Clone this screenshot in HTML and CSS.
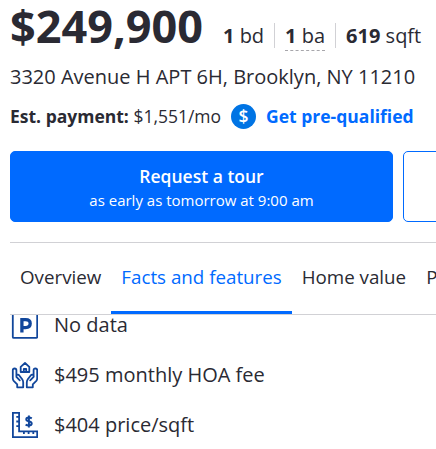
FILE: index.html
```html
<!DOCTYPE html>
<html lang="en">
<head>
<meta charset="utf-8">
<title>3320 Avenue H APT 6H</title>
<link rel="stylesheet" href="styles.css">
</head>
<body>
<main class="home">
  <header class="summary">
    <span class="price">$249,900</span>
    <div class="specs">
      <span class="spec"><b>1</b> bd</span>
      <span class="spec"><span class="hint"><b>1</b> ba</span></span>
      <span class="spec"><b>619</b> sqft</span>
    </div>
  </header>
  <h1 class="address">3320 Avenue H APT 6H, Brooklyn, NY 11210</h1>
  <div class="payment">
    <span><b>Est. payment:</b> <span class="amount">$1,551/mo</span></span>
    <span class="coin">$</span>
    <a class="prequal">Get pre-qualified</a>
  </div>
  <div class="actions">
    <button class="tour"><span class="tour-title">Request a tour</span><span class="tour-time">as early as tomorrow at 9:00 am</span></button>
    <button class="contact" aria-label="Contact agent"></button>
  </div>
  <nav class="tabs">
    <a class="tab">Overview</a>
    <a class="tab active">Facts and features</a>
    <a class="tab">Home value</a>
    <a class="tab">Price</a>
  </nav>
  <div class="facts">
    <ul class="fact-list">
      <li class="fact">
        <svg class="icon" viewBox="0 0 28 28"><rect x="2.8" y="1.7" width="24.4" height="25.2" rx="1" fill="none" stroke="#11469b" stroke-width="1.8"/><path d="M11.9 21.6V8.7H15.6Q20.2 8.7 20.2 12.6Q20.2 16.6 15.6 16.6H11.9" fill="none" stroke="#11469b" stroke-width="3.3"/></svg>
        <span>No data</span>
      </li>
      <li class="fact">
        <svg class="icon" viewBox="0 0 28 28" fill="none" stroke="#11469b" stroke-width="1.8" stroke-linejoin="round" stroke-linecap="round"><path d="M10.7 5.8L15 2L19.3 5.8V11H10.7ZM13.8 11V8H16.2V11"/><path d="M7.2 26.3V23.3L3.7 19.8Q2.8 18.8 2.8 17.2V9.2Q2.8 7.5 4.6 7.5T6.4 9.2V15.2M9.8 19.4L6.4 15.9Q5.9 14.4 7.2 13.8Q8.4 13.3 9.3 14.5L12.2 18.3Q13.2 19.6 13.2 21.5V26.3H7.2"/><path d="M22.8 26.3V23.3L26.3 19.8Q27.2 18.8 27.2 17.2V9.2Q27.2 7.5 25.4 7.5T23.6 9.2V15.2M20.2 19.4L23.6 15.9Q24.1 14.4 22.8 13.8Q21.6 13.3 20.7 14.5L17.8 18.3Q16.8 19.6 16.8 21.5V26.3H22.8"/></svg>
        <span>$495 monthly HOA fee</span>
      </li>
      <li class="fact">
        <svg class="icon" viewBox="0 0 28 28" fill="none" stroke="#11469b" stroke-width="1.8"><path d="M2.9 1.9H9.1V20.3H27.2V26.2H2.9ZM6.3 5.8H9.1M6.3 10.5H9.1M6.3 15.2H9.1M13.9 20.3V22.9M18.6 20.3V22.9M23.3 20.3V22.9"/><path d="M21.8 7.4Q20.5 6.6 18.7 6.6Q16.3 6.6 16.3 8.4Q16.3 9.6 18.8 10.2Q21.7 10.9 21.7 12.5Q21.7 14.4 18.8 14.4Q17 14.4 15.6 13.6M18.9 4.5V16.4" stroke-width="2"/></svg>
        <span>$404 price/sqft</span>
      </li>
    </ul>
  </div>
</main>
</body>
</html>
```
FILE: styles.css
```css
* { box-sizing: border-box; }

body {
  margin: 0;
  background: #fff;
  color: #2a2a33;
  font-family: "Open Sans", "Noto Sans", sans-serif;
  overflow: hidden;
}

.home {
  height: 449px;
  padding-left: 10px;
  overflow: hidden;
  white-space: nowrap;
}

.summary {
  display: flex;
  height: 52px;
}

.price {
  width: 213px;
  font-size: 45px;
  font-weight: 700;
  line-height: 52px;
}

.specs {
  display: flex;
  height: 25px;
  margin-top: 23px;
  font-size: 20px;
  line-height: 25px;
}

.spec + .spec {
  margin-left: 10px;
  padding-left: 10px;
  border-left: 1px solid #d1d1d5;
}

.hint {
  display: block;
  height: 28px;
  border-bottom: 1px dashed #a7a6ab;
}

.address {
  margin: 11px 0 0;
  font-size: 20px;
  font-weight: 400;
  line-height: 28px;
}

.payment {
  display: flex;
  align-items: center;
  height: 28px;
  margin-top: 11px;
  font-size: 17.5px;
  line-height: 28px;
}

.coin {
  width: 25px;
  height: 25px;
  margin: 0 10px;
  border-radius: 50%;
  background: #0074e4;
  color: #fff;
  font-weight: 600;
  line-height: 25px;
  text-align: center;
}

.prequal {
  color: #006aff;
  font-weight: 700;
}

.actions {
  display: flex;
  gap: 10px;
  height: 71px;
  margin-top: 21px;
}

.tour,
.contact {
  flex: none;
  width: 383px;
  padding: 0;
  border: 1px solid #006aff;
  border-radius: 5px;
  background: #fff;
  font-family: inherit;
}

.tour {
  display: flex;
  flex-direction: column;
  align-items: center;
  justify-content: center;
  background: #006aff;
  color: #fff;
}

.tour-title {
  font-size: 17.5px;
  font-weight: 600;
  line-height: 26px;
}

.tour-time {
  font-size: 15px;
  line-height: 22px;
}

.tabs {
  display: flex;
  height: 73px;
  margin-top: 20px;
  border-top: 1px solid #d1d1d5;
  border-bottom: 1px solid #d1d1d5;
  font-size: 18.75px;
  line-height: 68px;
}

.tab {
  height: 71px;
  padding: 0 10px;
}

.active {
  border-bottom: 3px solid #006aff;
  color: #006aff;
}

.facts {
  height: 134px;
  overflow: hidden;
}

.fact-list {
  margin: -15px 0 0;
  padding: 0;
  list-style: none;
}

.fact {
  display: flex;
  align-items: center;
  gap: 16px;
  height: 50px;
  font-size: 20px;
  line-height: 28px;
}

.icon {
  width: 28px;
  height: 28px;
}
```
